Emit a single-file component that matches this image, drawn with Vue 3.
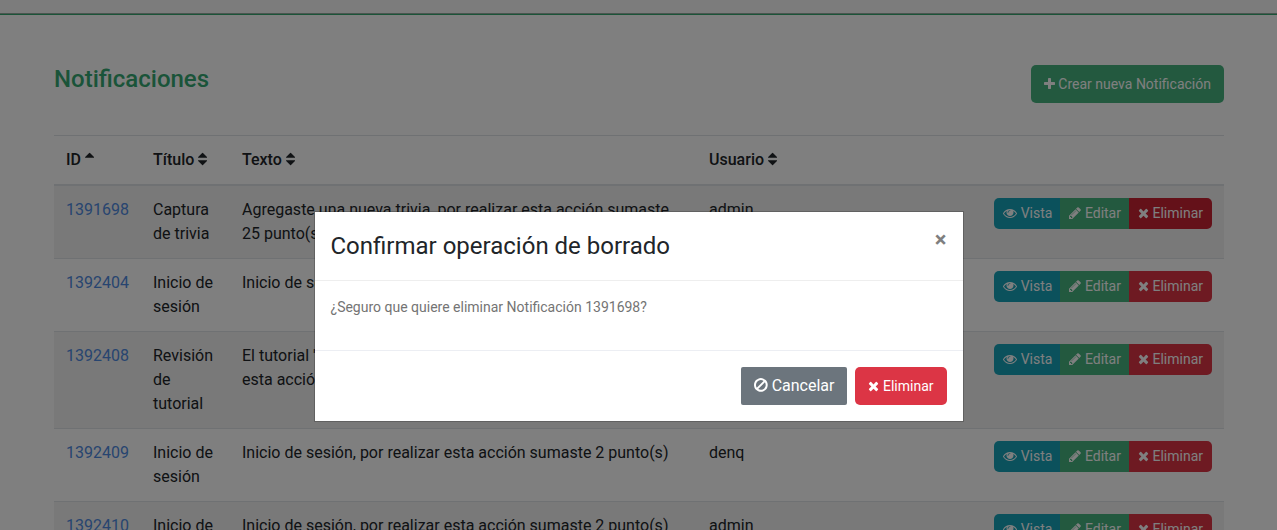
<script setup>
import { h } from 'vue'

const paths = {
  times: 'M1490 1322q0 40-28 68l-136 136q-28 28-68 28t-68-28l-294-294-294 294q-28 28-68 28t-68-28l-136-136q-28-28-28-68t28-68l294-294-294-294q-28-28-28-68t28-68l136-136q28-28 68-28t68 28l294 294 294-294q28-28 68-28t68 28l136 136q28 28 28 68t-28 68l-294 294 294 294q28 28 28 68z',
  plus: 'M1600 736v192q0 40-28 68t-68 28h-416v416q0 40-28 68t-68 28h-192q-40 0-68-28t-28-68v-416h-416q-40 0-68-28t-28-68v-192q0-40 28-68t68-28h416v-416q0-40 28-68t68-28h192q40 0 68 28t28 68v416h416q40 0 68 28t28 68z',
  pencil: 'M491 1536l91-91-235-235-91 91v107h128v128h107zm523-928q0-22-22-22-10 0-17 7l-542 542q-7 7-7 17 0 22 22 22 10 0 17-7l542-542q7-7 7-17zm-54-192l416 416-832 832h-416v-416zm683 96q0 53-37 90l-166 166-416-416 166-165q36-38 90-38 53 0 91 38l235 234q37 39 37 91z',
  eye: 'M1664 960q-152-236-381-353 61 104 61 225 0 185-131.5 316.5t-316.5 131.5-316.5-131.5-131.5-316.5q0-121 61-225-229 117-381 353 133 205 333.5 326.5t434.5 121.5 434.5-121.5 333.5-326.5zm-720-384q0-20-14-34t-34-14q-125 0-214.5 89.5t-89.5 214.5q0 20 14 34t34 14 34-14 14-34q0-86 61-147t147-61q20 0 34-14t14-34zm848 384q0 34-20 69-140 230-376.5 368.5t-499.5 138.5-499.5-139-376.5-368q-20-35-20-69t20-69q140-229 376.5-368t499.5-139 499.5 139 376.5 368q20 35 20 69z',
  ban: 'M1440 893q0-161-87-295l-754 753q137 89 297 89 111 0 211.5-43.5t173.5-116.5 116-174.5 43-212.5zm-999 299l755-754q-135-91-300-91-148 0-273 73t-198 199-73 274q0 162 89 299zm1223-299q0 157-61 300t-163.5 246-245 164-298.5 61-298.5-61-245-164-163.5-246-61-300 61-299.5 163.5-245.5 245-164 298.5-61 298.5 61 245 164 163.5 245.5 61 299.5z',
  sort: 'M1408 1088q0 26-19 45l-448 448q-19 19-45 19t-45-19l-448-448q-19-19-19-45t19-45 45-19h896q26 0 45 19t19 45zm0-384q0 26-19 45t-45 19h-896q-26 0-45-19t-19-45 19-45l448-448q19-19 45-19t45 19l448 448q19 19 19 45z',
  sortUp: 'M1408 704q0 26-19 45t-45 19h-896q-26 0-45-19t-19-45 19-45l448-448q19-19 45-19t45 19l448 448q19 19 19 45z',
}
const boxes = {
  times: '192 0 1408 1792',
  plus: '192 0 1408 1792',
  pencil: '128 0 1536 1792',
  eye: '0 0 1792 1792',
  ban: '128 0 1536 1792',
  sort: '384 0 1024 1792',
  sortUp: '384 0 1024 1792',
}
const Icon = (props) =>
  h('svg', { class: 'icon', viewBox: boxes[props.name], 'aria-hidden': 'true' }, [h('path', { d: paths[props.name] })])
Icon.props = ['name']

const columns = [
  { label: 'ID', icon: 'sortUp' },
  { label: 'Título', icon: 'sort' },
  { label: 'Texto', icon: 'sort' },
  { label: 'Usuario', icon: 'sort' },
]
const login = 'Inicio de sesión, por realizar esta acción sumaste 2 punto(s)'
const rows = [
  { id: 1391698, title: 'Captura de trivia', text: 'Agregaste una nueva trivia, por realizar esta acción sumaste 25 punto(s)', user: 'admin', active: true },
  { id: 1392404, title: 'Inicio de sesión', text: login, user: 'admin' },
  { id: 1392408, title: 'Revisión de tutorial', text: "El tutorial 'Bienvenida' fue revisado con éxito, por realizar esta\u00a0acción sumaste 5 punto(s)", user: 'admin' },
  { id: 1392409, title: 'Inicio de sesión', text: login, user: 'denq' },
  { id: 1392410, title: 'Inicio de sesión', text: login, user: 'admin' },
]
</script>

<template>
  <div class="page">
    <header class="topbar"></header>
    <main class="container">
      <div class="heading">
        <h1>Notificaciones</h1>
        <button type="button" class="btn green"><Icon name="plus" /> Crear nueva Notificación</button>
      </div>
      <table>
        <colgroup>
          <col class="c-id" /><col class="c-title" /><col class="c-text" /><col class="c-user" /><col />
        </colgroup>
        <thead>
          <tr>
            <th v-for="c in columns" :key="c.label" scope="col">{{ c.label }} <Icon :name="c.icon" /></th>
            <td></td>
          </tr>
        </thead>
        <tbody>
          <tr v-for="r in rows" :key="r.id">
            <td><a href="#">{{ r.id }}</a></td>
            <td>{{ r.title }}</td>
            <td>{{ r.text }}</td>
            <td>{{ r.user }}</td>
            <td>
              <div class="group">
                <button type="button" class="btn small info"><Icon name="eye" /> Vista</button>
                <button type="button" class="btn small green"><Icon name="pencil" /> Editar</button>
                <button type="button" class="btn small red" :class="{ active: r.active }"><Icon name="times" /> Eliminar</button>
              </div>
            </td>
          </tr>
        </tbody>
      </table>
    </main>
    <div class="backdrop">
      <section class="modal" role="dialog" aria-modal="true" aria-labelledby="dialog-title">
        <div class="modal-head">
          <h2 id="dialog-title">Confirmar operación de borrado</h2>
          <button type="button" class="close" aria-label="Cerrar">×</button>
        </div>
        <div class="modal-body"><p>¿Seguro que quiere eliminar Notificación 1391698?</p></div>
        <div class="modal-foot">
          <button type="button" class="btn gray"><Icon name="ban" /> Cancelar</button>
          <button type="button" class="btn red"><Icon name="times" /> Eliminar</button>
        </div>
      </section>
    </div>
  </div>
</template>

<style>
body {
  margin: 0;
  overflow: hidden;
}
</style>

<style scoped>
.page {
  height: 100vh;
  overflow: hidden;
  background: #fff;
  color: #212529;
  font: 400 16px/24px Roboto, "Liberation Sans", sans-serif;
}
.page * {
  box-sizing: border-box;
}
.icon {
  height: 1em;
  width: auto;
  fill: currentColor;
  vertical-align: -2px;
}
.topbar {
  height: 15px;
  background: #f8f8f8;
  border-bottom: 1px solid #34a871;
  box-shadow: inset 0 -1px 0 #94aca0;
}
.container {
  padding: 50px 53px 0 54px;
}
.heading {
  display: flex;
  justify-content: space-between;
  align-items: flex-start;
  padding-bottom: 32px;
}
h1 {
  margin: 0;
  font-size: 24px;
  font-weight: 500;
  line-height: 28px;
  color: #34a872;
}
.btn {
  border: 1px solid transparent;
  border-radius: 5px;
  padding: 6px 12px;
  font-family: inherit;
  font-size: 14px;
  font-weight: 400;
  line-height: 24px;
  color: #fff;
  white-space: nowrap;
}
.small {
  padding: 4px 8px;
  line-height: 21px;
}
.green { background: #46b27e; }
.info { background: #17a2b8; }
.red { background: #dc3545; }
.red.active { background: #c82333; }
.gray {
  background: #6c757d;
  font-size: 16px;
  border-radius: 2px;
}
.group {
  display: flex;
  justify-content: flex-end;
}
.group .btn { border-radius: 0; }
.group .btn + .btn { margin-left: -1px; }
.group .btn:first-child { border-radius: 5px 0 0 5px; }
.group .btn:last-child { border-radius: 0 5px 5px 0; }
table {
  width: 100%;
  table-layout: fixed;
  border-collapse: collapse;
}
.c-id { width: 87px; }
.c-title { width: 89px; }
.c-text { width: 467px; }
.c-user { width: 160px; }
th,
td {
  padding: 12px;
  text-align: left;
  vertical-align: top;
  border-top: 1px solid #dee2e6;
}
th { font-weight: 500; }
thead th,
thead td { border-bottom: 2px solid #dee2e6; }
tbody tr:nth-child(odd) { background: #f2f2f2; }
a {
  color: #4f8ae0;
  text-decoration: none;
}
.backdrop {
  position: fixed;
  inset: 0;
  display: flex;
  justify-content: center;
  align-items: flex-start;
  padding-top: 211px;
  background: rgba(0, 0, 0, 0.5);
}
.modal {
  width: 650px;
  background: #fff;
  background-clip: padding-box;
  border: 1px solid rgba(0, 0, 0, 0.2);
}
.modal-head {
  display: flex;
  justify-content: space-between;
  align-items: flex-start;
  padding: 16px;
  border-bottom: 1px solid #eee;
}
h2 {
  margin: 0;
  font-size: 24px;
  font-weight: 400;
  line-height: 36px;
}
.close {
  border: 0;
  padding: 0;
  background: none;
  color: #7f7f7f;
  font-family: inherit;
  font-size: 22px;
  font-weight: 700;
  line-height: 24px;
}
.modal-body { padding: 16px; }
p {
  margin: 0 0 16px;
  font-size: 14px;
  font-weight: 400;
  line-height: 21px;
  color: #747474;
}
.modal-foot {
  display: flex;
  justify-content: flex-end;
  gap: 8px;
  padding: 16px;
  border-top: 1px solid #eceef3;
}
</style>
